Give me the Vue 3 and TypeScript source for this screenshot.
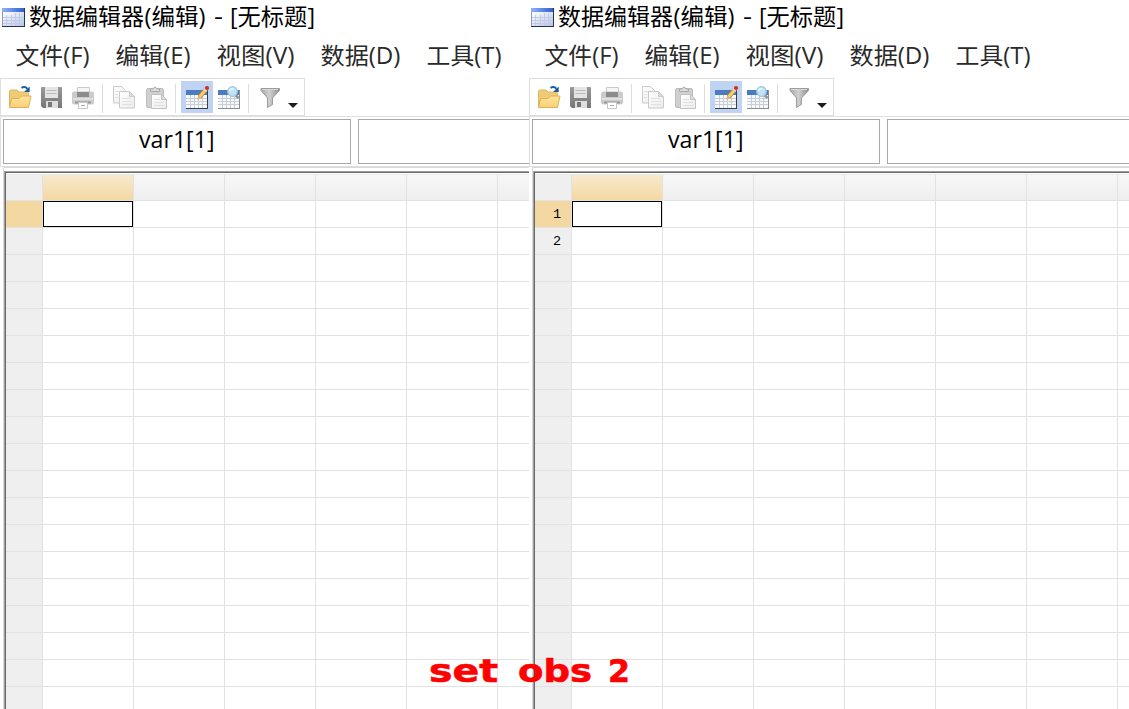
<script setup lang="ts">
interface Pane { id: string; rows: string[] }
interface TextItem { label: string; x: number; w: number }

const panes: Pane[] = [
  { id: 'left', rows: [] },
  { id: 'right', rows: ['1', '2'] },
]
const titleParts: TextItem[] = [
  { label: '数据编辑器', x: 0, w: 115 },
  { label: '(编辑)', x: 115.5, w: 61 },
  { label: '-', x: 185, w: 9 },
  { label: '[无标题]', x: 201, w: 85 },
]
const menus: TextItem[] = [
  { label: '文件(F)', x: 15.5, w: 74 },
  { label: '编辑(E)', x: 115.5, w: 75 },
  { label: '视图(V)', x: 216.5, w: 78 },
  { label: '数据(D)', x: 320.5, w: 80 },
  { label: '工具(T)', x: 426.5, w: 75 },
]
const caption: TextItem[] = [
  { label: 'set', x: 3, w: 69 },
  { label: 'obs', x: 92, w: 74 },
  { label: '2', x: 182, w: 22 },
]
const rowCount = 19
const colCount = 7
</script>

<template>
  <main class="stage">
    <section v-for="p in panes" :key="p.id" class="pane" :class="p.id">
      <header class="title">
        <svg class="app-icon" width="24" height="20" viewBox="0 0 24 20">
          <defs>
            <linearGradient :id="p.id + 'ib'" x1="0" y1="0" x2="1" y2="0"><stop offset="0" stop-color="#8fb2fa" /><stop offset="1" stop-color="#2b5cd0" /></linearGradient>
            <linearGradient :id="p.id + 'ic'" x1="0" y1="0" x2="1" y2="1"><stop offset="0" stop-color="#fff" /><stop offset="1" stop-color="#b4c5f0" /></linearGradient>
          </defs>
          <rect x="0" y="0" width="23" height="19" fill="#8c9cba" />
          <rect x="1" y="4" width="21" height="14" :fill="`url(#${p.id}ic)`" />
          <rect x="0" y="0" width="23" height="4" :fill="`url(#${p.id}ib)`" />
          <path d="M1 9.5h21M1 12.5h21M1 15.5h21M4.5 7v11M9.5 7v11M13.5 5v13M17.5 5v13" stroke="#c3cce0" fill="none" />
          <path d="M22.5 0v19M0 18.5h23" stroke="#25334f" fill="none" />
        </svg>
        <svg class="title-text" width="300" height="36"><text v-for="t in titleParts" :key="t.label" :x="t.x" y="25" :textLength="t.w" lengthAdjust="spacingAndGlyphs">{{ t.label }}</text></svg>
      </header>
      <nav class="menu">
        <svg width="529" height="42"><text v-for="m in menus" :key="m.label" :x="m.x" y="28" :textLength="m.w" lengthAdjust="spacingAndGlyphs">{{ m.label }}</text></svg>
      </nav>
      <div class="toolbar-row">
        <div class="toolbar">
          <svg width="303" height="36" viewBox="1 79 303 36">
            <defs>
              <linearGradient :id="p.id + 'fo'" x1="0" y1="0" x2="0" y2="1"><stop offset="0" stop-color="#ffe49a" /><stop offset="1" stop-color="#f7d076" /></linearGradient>
              <linearGradient :id="p.id + 'me'" x1="0" y1="0" x2="0" y2="1"><stop offset="0" stop-color="#999" /><stop offset="1" stop-color="#777" /></linearGradient>
              <linearGradient :id="p.id + 'fu'" x1="0" y1="0" x2="1" y2="0"><stop offset="0" stop-color="#a8a8a8" /><stop offset=".45" stop-color="#d0d0d0" /><stop offset="1" stop-color="#8e8e8e" /></linearGradient>
              <linearGradient :id="p.id + 'pg'" x1="0" y1="0" x2="1" y2="1"><stop offset="0" stop-color="#fff" /><stop offset="1" stop-color="#ebebeb" /></linearGradient>
            </defs>
            <g stroke-linejoin="round">
              <path d="M9.5 106V91.5q0-1.500 1.500-1.500h6l2 2h8q1.500 0 1.500 1.500V106z" fill="#efcb77" stroke="#ddb55f" />
              <path d="M9.500 107.500l2-9h7.500l2.500-2.500h9.500l-2.500 11.500z" :fill="`url(#${p.id}fo)`" stroke="#dfb055" />
              <path d="M21.500 87.800q3.500-2 6 1" fill="none" stroke="#195b9d" stroke-width="2" />
              <path d="M29.700 86.500v5.500h-5.500z" fill="#195b9d" />
            </g>
            <g>
              <path d="M41 88q0-1 1-1h19q1 0 1 1v20h-19l-2-2z" :fill="`url(#${p.id}me)`" />
              <rect x="45" y="87" width="13" height="11" fill="#e4e4e4" /><path d="M46.500 90.500h10M46.500 93.500h10" stroke="#bbb" />
              <rect x="46" y="101" width="12" height="7" fill="#dedede" /><rect x="48" y="102" width="4" height="5" fill="#777" />
            </g>
            <g>
              <path d="M77.500 95v-7.500h12V95" fill="#f5f5f5" stroke="#c9c9c9" />
              <rect x="72" y="91.500" width="22" height="13" rx="2" fill="#cbcbcb" />
              <rect x="77" y="92" width="12" height="5" fill="#8c8c8c" />
              <path d="M73 99h20" stroke="#e0e0e0" stroke-width="2" />
              <path d="M75 102.500h16" stroke="#999" stroke-width="2" />
              <path d="M78.500 102.500h9v6h-9z" fill="#fff" stroke="#c6c6c6" /><path d="M81 105.500h4" stroke="#aaa" />
            </g>
            <path d="M102.500 84v29M175.500 84v29M248.500 84v29" stroke="#dcdcdc" />
            <g :fill="`url(#${p.id}pg)`" stroke="#cbcbcb" stroke-linejoin="round">
              <path d="M113.500 86.500h8l4 4v12.500h-12z" />
              <path d="M119.500 91.500h10l5 5v11.500h-15z" /><path d="M129.500 91.500v5h5z" fill="#dcdcdc" />
              <path d="M115 91.500h4M115 94.500h3M115 97.500h3M122 98.500h9M122 101.500h10M122 104.500h10" stroke="#e0e0e0" />
            </g>
            <g stroke-linejoin="round">
              <rect x="146.500" y="88.500" width="17" height="19" rx="1.500" fill="#d0d0d0" stroke="#bdbdbd" />
              <path d="M150.500 91.500v-2.500h2.500q2-4 4 0h2.500v2.500z" fill="#ddd" stroke="#aaa" />
              <path d="M151.500 94.500h10l5 5v9h-15z" :fill="`url(#${p.id}pg)`" stroke="#c3c3c3" />
              <path d="M161.500 94.500v5h5z" fill="#dcdcdc" stroke="#c3c3c3" /><path d="M154 99.500h6M154 102.500h10M154 105.500h10" stroke="#e0e0e0" />
            </g>
            <rect x="181" y="81" width="32" height="32" fill="#c1d3f3" />
            <g v-for="x in [186, 218]" :key="x" :transform="`translate(${x} 90)`">
              <rect width="22" height="19" :fill="x === 186 ? '#3c4046' : '#8a8e95'" />
              <rect width="21" height="5" fill="#4b7cc0" />
              <rect x="0" y="5" width="21" height="13" fill="#f7f8fa" />
              <path d="M0 8.500h21M0 11.500h21M0 14.500h21M4.500 5v13M8.500 5v13M12.500 5v13M16.500 5v13" stroke="#c9cdd5" />
            </g>
            <g stroke-linecap="butt">
              <path d="M199.500 97l6-7" stroke="#b58632" stroke-width="4.500" /><path d="M199.500 97l6-7" stroke="#f9cc64" stroke-width="3" />
              <path d="M197.300 100l.8-4.500 3 2.500z" fill="#d9b67d" /><path d="M204.700 90.700l1.300-1.500" stroke="#ddd" stroke-width="4" />
              <circle cx="207" cy="88" r="2.100" fill="#cb3028" />
            </g>
            <path d="M235.500 95l3 3" stroke="#8d949c" stroke-width="2.500" />
            <circle cx="232.500" cy="91.500" r="4.800" fill="#bfe3f4" stroke="#9fc3da" stroke-width="1.200" />
            <path d="M229.500 91q1-3 4-2" fill="none" stroke="#eefaff" stroke-width="1.500" />
            <path d="M261 88.500h18.500v2l-7 7.500v6.500l-5 3V98l-6.500-7.500z" :fill="`url(#${p.id}fu)`" stroke="#9c9c9c" />
            <path d="M262 89.500h16" stroke="#d9d9d9" />
            <path d="M288 103h10l-5 5z" fill="#1c1c1c" />
          </svg>
        </div>
      </div>
      <div class="fields">
        <div class="cell-name"><svg width="346" height="43"><text x="135" y="28" textLength="75.5" lengthAdjust="spacingAndGlyphs">var1[1]</text></svg></div>
        <div class="cell-value"></div>
      </div>
      <div class="sheet">
        <div class="grid">
          <div class="row head"><span class="corner"></span><span v-for="c in colCount" :key="c" class="cell" :class="{ active: c === 1 }"></span></div>
          <div v-for="r in rowCount" :key="r" class="row">
            <span class="index" :class="{ active: r === 1 }">{{ p.rows[r - 1] }}</span>
            <span v-for="c in colCount" :key="c" class="cell" :class="{ selected: r === 1 && c === 1 }"></span>
          </div>
        </div>
      </div>
    </section>
    <svg class="caption" width="220" height="50">
      <text v-for="t in caption" :key="t.label" :x="t.x" y="31.5" :textLength="t.w" lengthAdjust="spacingAndGlyphs">{{ t.label }}</text>
    </svg>
  </main>
</template>

<style>
html, body { margin: 0; overflow: hidden; background: #fff; }
</style>
<style scoped>
* { box-sizing: border-box; }
svg { display: block; flex: none; }
.stage { position: relative; display: flex; width: 1129px; height: 709px; overflow: hidden; background: #fff; font-family: "Open Sans", "Noto Sans CJK SC", sans-serif; }
.pane { display: flex; flex-direction: column; width: 529px; height: 709px; overflow: hidden; flex: none; }
.pane.right { width: 600px; }
.title { height: 36px; flex: none; display: flex; padding-left: 2px; }
.app-icon { margin-top: 8px; }
.title-text { margin-left: 3px; font-size: 23px; fill: #000; }
.menu { height: 42px; flex: none; font-size: 23px; fill: #2a2a2a; }
.toolbar-row { height: 39px; flex: none; border-bottom: 1px solid #e0e0e0; }
.toolbar { width: 305px; height: 38px; border: 1px solid #dedede; }
.fields { height: 50px; flex: none; display: flex; gap: 7px; padding: 2px 0 0 2px; border-left: 1px solid #dedede; border-bottom: 1px solid #dedede; }
.cell-name { width: 348px; height: 45px; flex: none; border: 1px solid #a8a8a8; font-size: 23px; }
.cell-value { flex: 1; height: 45px; border: 1px solid #a8a8a8; border-right: 0; }
.sheet { flex: 1; min-height: 0; margin-left: 3px; padding-top: 3px; border-top: 1px solid #d9d9d9; border-left: 1px solid #d9d9d9; }
.grid { height: 100%; overflow: hidden; border-top: 1px solid #a0a0a0; border-left: 1px solid #a0a0a0; box-shadow: inset 1px 1px #696969; padding: 2px 0 0 1px; }
.row { display: flex; height: 27px; }
.row.head { border-top: 1px solid #ebebeb; background: linear-gradient(#f7f7f7, #eee); }
.corner, .index { width: 37px; flex: none; border-right: 1px solid #e2e2e2; border-bottom: 1px solid #e2e2e2; background: #efefef; }
.index { font: 13.5px/28px "Liberation Mono", monospace; text-align: right; padding-right: 10px; color: #000; }
.index.active { background: #f3d8a2; }
.cell { width: 91px; flex: none; border-right: 1px solid #e2e2e2; border-bottom: 1px solid #e2e2e2; }
.cell.active { background: linear-gradient(#f8e9ce, #f3d8a2); }
.cell.selected { box-shadow: inset 0 0 0 1px #000; }
.caption { position: absolute; left: 426px; top: 650px; font: bold 32px "DejaVu Sans", sans-serif; fill: #f00; stroke: #f00; stroke-width: .6; }
</style>
